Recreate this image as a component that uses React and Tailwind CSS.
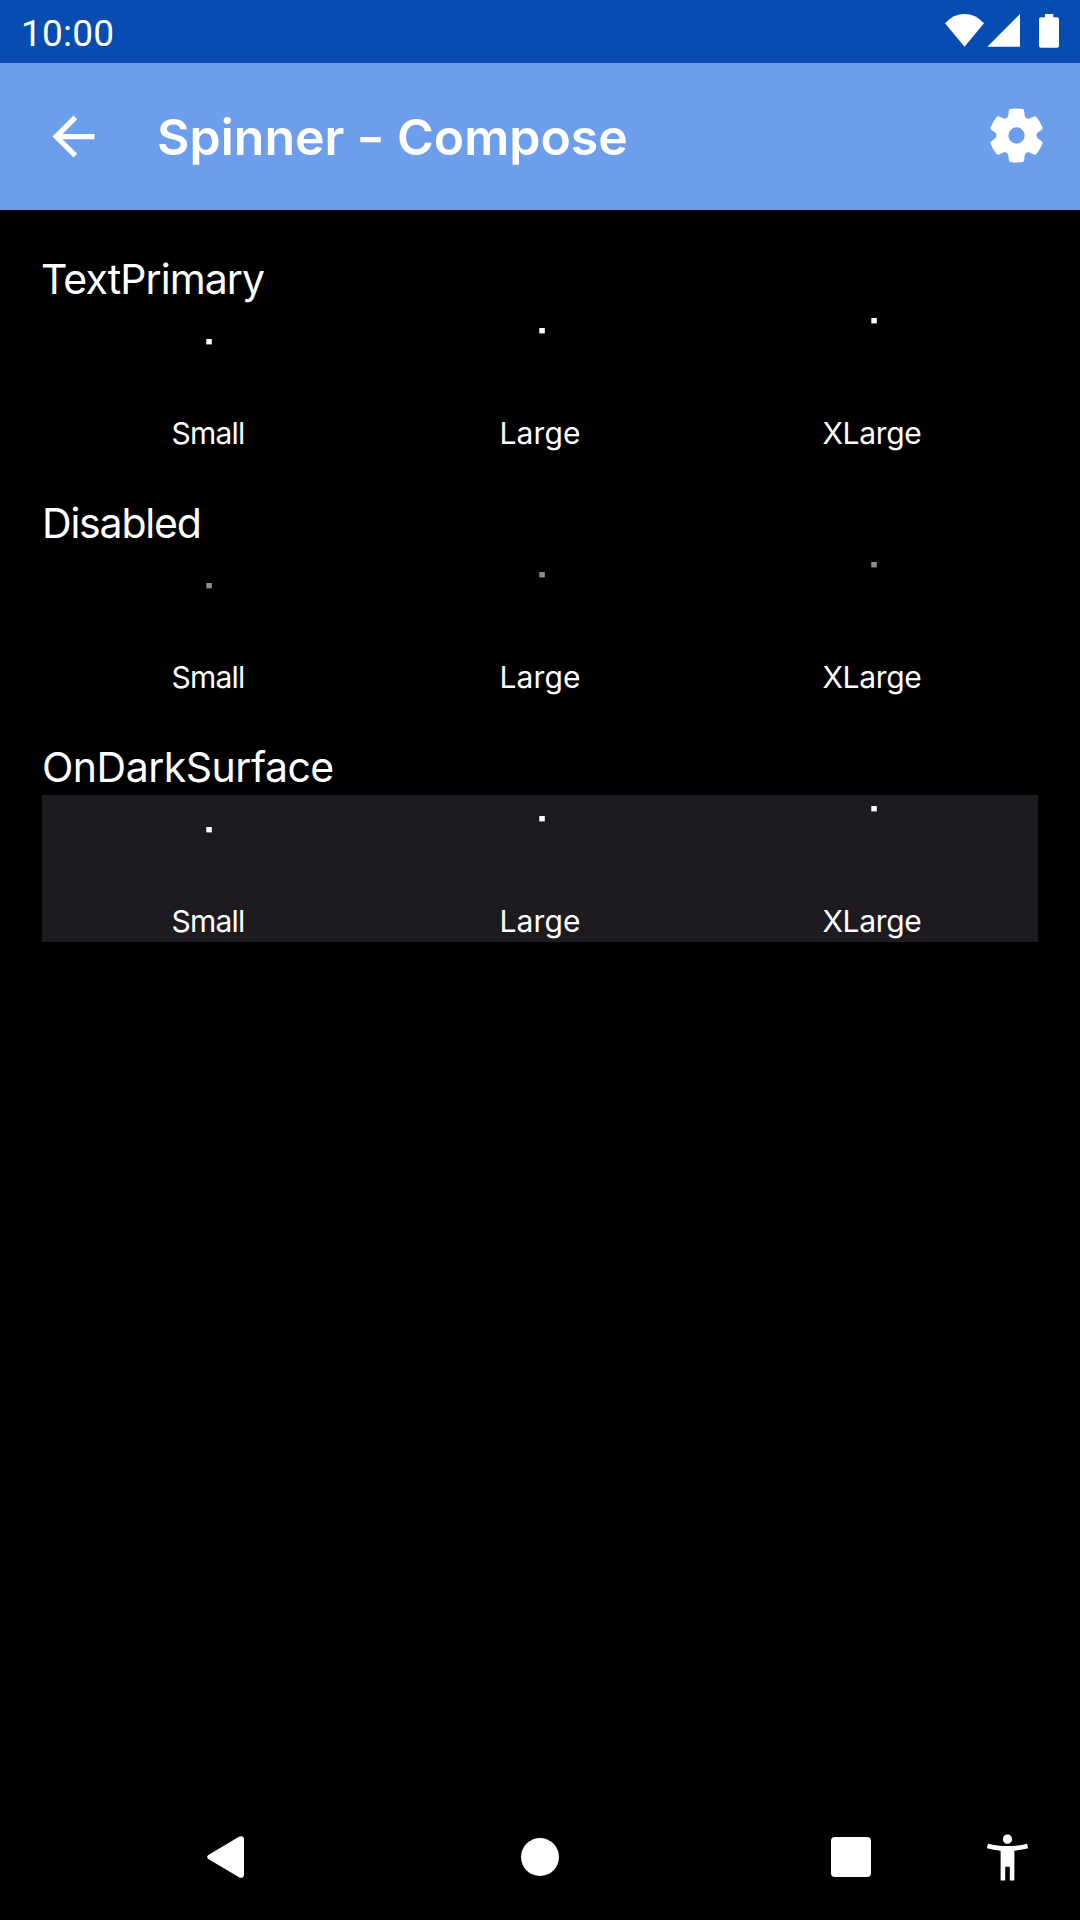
const sections = [
  { title: 'TextPrimary', spacing: '-ml-px tracking-[-0.9px]', panel: '', dot: 'text-white' },
  { title: 'Disabled', spacing: 'tracking-[-1.2px]', panel: '', dot: 'text-[#8e8e93]' },
  { title: 'OnDarkSurface', spacing: 'tracking-[-0.5px]', panel: 'bg-[#1e1b20]', dot: 'text-white' },
];

const sizes = [
  { label: 'Small', top: 'mt-[32px] ml-[2px]', spacing: 'tracking-[-0.8px]' },
  { label: 'Large', top: 'mt-[21px] ml-[4px]', spacing: 'tracking-[0.1px]' },
  { label: 'XLarge', top: 'mt-[11px] ml-[4px]', spacing: 'tracking-[-0.3px]' },
];

// One tooth and one valley of the cog, repeated every 60 degrees.
function cogPath() {
  const turn = (x, y, k) => {
    const a = (k * Math.PI) / 3;
    return `${(x * Math.cos(a) - y * Math.sin(a)).toFixed(2)} ${(x * Math.sin(a) + y * Math.cos(a)).toFixed(2)}`;
  };
  let d = `M${turn(-18, -78, 0)}`;
  for (let k = 0; k < 6; k += 1) {
    const p = (x, y) => turn(x, y, k);
    d += `Q${p(0, -81)} ${p(18, -78)}Q${p(22, -77)} ${p(22.5, -73)}L${p(24, -60)}`;
    d += `C${p(25.5, -51)} ${p(31.5, -47.6)} ${p(40, -50.8)}L${p(52, -56)}Q${p(55.7, -57.6)} ${p(58.6, -54.6)}`;
  }
  return `${d}Z M-24 0A24 24 0 1 0 24 0A24 24 0 1 0 -24 0Z`;
}

function StatusBar() {
  return (
    <div className="flex h-[63px] shrink-0 items-start justify-between bg-[#064cb1] pl-[21px] pr-[20px]">
      <span className="mt-[12px] font-['Roboto',sans-serif] text-[37px] leading-[44px] tracking-[0.2px]">10:00</span>
      <svg className="mt-[13px] h-[36px] w-[116px]" viewBox="944 13 116 36" fill="currentColor">
        <path d="M964.5 46.7 945 23.2Q953.5 14 964.5 14T984 23.2Z" />
        <path d="M1020 14V46.7H987.3Z" />
        <path d="M1045 14h8.3v3.2h3.7a2 2 0 0 1 2 2v26.6a2 2 0 0 1-2 2h-16a2 2 0 0 1-2-2V19.200a2 2 0 0 1 2-2h4Z" />
      </svg>
    </div>
  );
}

function AppBar() {
  return (
    <header className="flex h-[147px] shrink-0 items-center bg-[#6d9eeb] pl-[42px] pr-[36px]">
      <svg className="size-[63px]" viewBox="0 0 24 24" fill="currentColor">
        <path d="M20 11H7.830l5.590-5.590L12 4l-8 8 8 8 1.410-1.410L7.830 13H20v-2z" />
      </svg>
      <h1 className="ml-[52px] flex-1 whitespace-nowrap font-['Inter',sans-serif] text-[50px] font-semibold leading-[60px]">
        Spinner <span className="mx-[2px] inline-block scale-x-[1.25]">-</span> Compose
      </h1>
      <svg className="mb-[2px] size-[55px]" viewBox="-81 -81 162 162" fill="currentColor" fillRule="evenodd">
        <path d={cogPath()} />
      </svg>
    </header>
  );
}

function Section({ title, spacing, panel, dot }) {
  return (
    <section className="flex h-[244px] flex-col justify-end">
      <h2 className={`mb-[2px] whitespace-nowrap text-[41px] leading-[52px] ${spacing}`}>{title}</h2>
      <div className={`grid h-[147px] grid-cols-3 ${panel}`}>
        {sizes.map((size) => (
          <div key={size.label} className="flex flex-col items-center justify-between">
            <svg className={`size-[6px] ${size.top} ${dot}`} viewBox="0 0 6 6" fill="currentColor">
              <rect x="0.3" width="5.5" height="5.4" />
            </svg>
            <span className={`text-[30px] leading-[42px] ${size.spacing}`}>{size.label}</span>
          </div>
        ))}
      </div>
    </section>
  );
}

function NavigationBar() {
  return (
    <nav className="flex h-[126px] shrink-0 items-center pl-[207px] pr-[44px]">
      <svg className="h-[42px] w-[37px]" viewBox="0 0 37 42" fill="currentColor">
        <path d="M1.300 19 32 .8Q34 -.3 36 .8Q37 1.500 37 3V39Q37 40.500 36 41.200Q34 42.300 32 41.200L1.300 23Q-1 21 1.300 19Z" />
      </svg>
      <span className="ml-[277px] size-[38px] rounded-full bg-white" />
      <span className="ml-[272px] size-[40px] rounded-[4px] bg-white" />
      <svg className="ml-[109px] size-[55px]" viewBox="0 0 24 24" fill="currentColor">
        <path d="M20.500 6c-2.610.7-5.670 1-8.500 1s-5.890-.3-8.500-1L3 8c1.860.5 4 .83 6 1v13h2v-6h2v6h2V9c2-.17 4.140-.5 6-1l-.5-2zM12 6c1.100 0 2-.9 2-2s-.9-2-2-2-2 .9-2 2 .9 2 2 2z" />
      </svg>
    </nav>
  );
}

export default function App() {
  return (
    <div className="flex h-[1920px] w-[1080px] flex-col bg-black font-['Inter',sans-serif] text-white">
      <StatusBar />
      <AppBar />
      <main className="flex-1 px-[42px]">
        {sections.map((section) => (
          <Section key={section.title} {...section} />
        ))}
      </main>
      <NavigationBar />
    </div>
  );
}
